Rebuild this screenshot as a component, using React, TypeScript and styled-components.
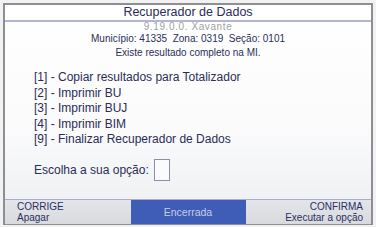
import React from "react";
import styled, { createGlobalStyle } from "styled-components";

const GlobalStyle = createGlobalStyle`
  html, body {
    margin: 0;
    padding: 0;
    background: #e9eaec;
  }
  body {
    font-family: "Liberation Sans", Arial, sans-serif;
  }
`;

const Screen = styled.div`
  width: 376px;
  height: 227px;
  padding: 3px 3px 2px 3px;
  box-sizing: border-box;
  background: #f2f2f3;
`;

const Frame = styled.div`
  height: 100%;
  box-sizing: border-box;
  border: 2px solid #8e8f94;
  border-bottom-width: 1px;
  background: linear-gradient(#ffffff 0%, #fbfbfc 55%, #eceef1 100%);
  display: flex;
  flex-direction: column;
  color: #2b2f5c;
`;

const Header = styled.div`
  display: flex;
  flex-direction: column;
  align-items: center;
`;

const Title = styled.div`
  font-size: 12.5px;
  line-height: 14px;
  color: #2a2d55;
`;

const Divider = styled.div`
  align-self: stretch;
  height: 2px;
  background: #b3b6d2;
  margin-top: 1px;
`;

const Version = styled.div`
  font-size: 10px;
  line-height: 10px;
  letter-spacing: 0.6px;
  color: #a0a0a6;
`;

const InfoLine = styled.div`
  font-size: 10px;
  line-height: 13.5px;
`;

const Menu = styled.ul`
  list-style: none;
  margin: 11px 0 0 0;
  padding: 0 0 0 29px;
  display: flex;
  flex-direction: column;
`;

const MenuItem = styled.li`
  font-size: 12px;
  line-height: 15.5px;
  color: #2a2d55;
`;

const Prompt = styled.div`
  display: flex;
  align-items: center;
  gap: 5px;
  padding-left: 29px;
  margin-top: 11px;
  font-size: 12px;
  color: #2a2d55;
`;

const InputBox = styled.div`
  width: 14px;
  height: 20px;
  border: 1px solid #8a8ea8;
  background: #fbfbfd;
`;

const Footer = styled.div`
  margin-top: auto;
  height: 24px;
  border-top: 1px solid #a9add0;
  background: linear-gradient(#e4e5ea, #d9dade);
  display: grid;
  grid-template-columns: 1fr 115px 1fr;
`;

const FooterKey = styled.div<{ $align: "left" | "right" }>`
  display: flex;
  flex-direction: column;
  justify-content: center;
  align-items: ${(p) => (p.$align === "left" ? "flex-start" : "flex-end")};
  padding: 0 8px 0 12px;
  font-size: 10px;
  line-height: 11px;
  color: #2a2f62;
`;

const StatusBox = styled.div`
  background: #3f5cb6;
  color: #c5cdea;
  font-size: 10.5px;
  display: flex;
  align-items: center;
  justify-content: center;
`;

const options = [
  "[1] - Copiar resultados para Totalizador",
  "[2] - Imprimir BU",
  "[3] - Imprimir BUJ",
  "[4] - Imprimir BIM",
  "[9] - Finalizar Recuperador de Dados",
];

export default function App() {
  return (
    <>
      <GlobalStyle />
      <Screen>
        <Frame>
          <Header>
            <Title>Recuperador de Dados</Title>
            <Divider />
            <Version>9.19.0.0. Xavante</Version>
            <InfoLine>Município: 41335&nbsp; Zona: 0319&nbsp; Seção: 0101</InfoLine>
            <InfoLine>Existe resultado completo na MI.</InfoLine>
          </Header>

          <Menu>
            {options.map((o) => (
              <MenuItem key={o}>{o}</MenuItem>
            ))}
          </Menu>

          <Prompt>
            Escolha a sua opção:
            <InputBox />
          </Prompt>

          <Footer>
            <FooterKey $align="left">
              <span>CORRIGE</span>
              <span>Apagar</span>
            </FooterKey>
            <StatusBox>Encerrada</StatusBox>
            <FooterKey $align="right">
              <span>CONFIRMA</span>
              <span>Executar a opção</span>
            </FooterKey>
          </Footer>
        </Frame>
      </Screen>
    </>
  );
}
